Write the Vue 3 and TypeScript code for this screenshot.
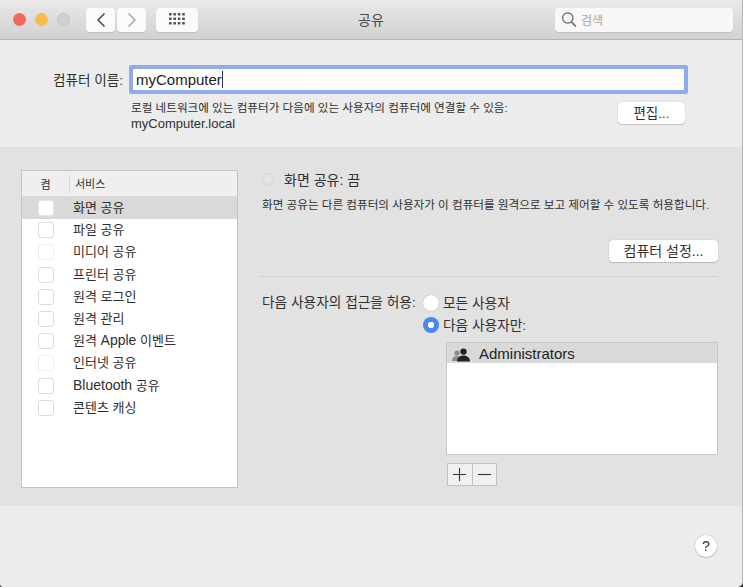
<script setup lang="ts">
import { ref } from 'vue'

interface Service {
  name: string
  latin?: string
  suffix?: string
  dim?: boolean
}

const services: Service[] = [
  { name: '화면 공유' },
  { name: '파일 공유' },
  { name: '미디어 공유', dim: true },
  { name: '프린터 공유' },
  { name: '원격 로그인' },
  { name: '원격 관리' },
  { name: '원격 ', latin: 'Apple', suffix: ' 이벤트' },
  { name: '인터넷 공유', dim: true },
  { name: '', latin: 'Bluetooth', suffix: ' 공유' },
  { name: '콘텐츠 캐싱' },
]

const selected = ref(0)
</script>

<template>
  <div class="window">
    <header class="titlebar">
      <div class="lights">
        <span class="light red"></span>
        <span class="light yellow"></span>
        <span class="light grey"></span>
      </div>
      <div class="nav">
        <button class="tool nav-btn">
          <svg width="10" height="16" viewBox="0 0 10 16"><path d="M8.5 1.500 2 8l6.500 6.500" fill="none" stroke="#4a4a4a" stroke-width="1.500" /></svg>
        </button>
        <button class="tool nav-btn">
          <svg width="10" height="16" viewBox="0 0 10 16"><path d="M1.500 1.500 8 8l-6.500 6.500" fill="none" stroke="#a9a9a9" stroke-width="1.500" /></svg>
        </button>
      </div>
      <button class="tool grid-btn">
        <svg width="17" height="13" viewBox="0 0 17 13" fill="#555">
          <template v-for="y in [0, 4.5, 9]" :key="y">
            <rect v-for="x in [0, 4.4, 8.8, 13.2]" :key="x" :x="x" :y="y" width="2.600" height="2.600" rx="0.500" />
          </template>
        </svg>
      </button>
      <div class="title">공유</div>
      <div class="search">
        <svg width="16" height="17" viewBox="0 0 16 17"><circle cx="6.800" cy="7" r="5.200" fill="none" stroke="#5f5f5f" stroke-width="1.200" /><path d="m10.600 11 4.200 4.600" stroke="#5f5f5f" stroke-width="1.500" /></svg>
        <span>검색</span>
      </div>
    </header>

    <section class="name-section">
      <div class="name-row">
        <label class="name-label">컴퓨터 이름:</label>
        <div class="name-input"><span class="latin-big">myComputer</span><i class="caret"></i></div>
      </div>
      <div class="local-row">
        <p class="local-text">로컬 네트워크에 있는 컴퓨터가 다음에 있는 사용자의 컴퓨터에 연결할 수 있음:<br /><span class="latin">myComputer.local</span></p>
        <button class="btn edit-btn">편집...</button>
      </div>
    </section>

    <section class="service-section">
      <div class="service-list">
        <div class="list-head">
          <span class="head-on">켬</span>
          <span class="head-name">서비스</span>
        </div>
        <div
          v-for="(s, i) in services"
          :key="i"
          class="service-row"
          :class="{ selected: selected === i }"
          @click="selected = i"
        >
          <span class="check" :class="{ dim: s.dim }"></span>
          <span class="service-name">{{ s.name }}<span v-if="s.latin" class="latin">{{ s.latin }}</span>{{ s.suffix }}</span>
        </div>
      </div>

      <div class="detail">
        <div class="status">
          <span class="status-dot"></span>
          <span class="status-text">화면 공유: 끔</span>
        </div>
        <p class="status-desc">화면 공유는 다른 컴퓨터의 사용자가 이 컴퓨터를 원격으로 보고 제어할 수 있도록 허용합니다.</p>
        <div class="settings-row">
          <button class="btn settings-btn">컴퓨터 설정...</button>
        </div>
        <div class="divider"></div>
        <div class="access">
          <span class="access-label">다음 사용자의 접근을 허용:</span>
          <div class="radios">
            <div class="radio-row"><span class="radio"></span><span class="radio-text">모든 사용자</span></div>
            <div class="radio-row"><span class="radio on"></span><span class="radio-text">다음 사용자만:</span></div>
          </div>
        </div>
        <div class="users">
          <div class="user-row">
            <svg width="19" height="14" viewBox="0 0 19 14">
              <circle cx="5" cy="5" r="2.600" fill="#8a8a8a" />
              <path d="M0 13c0-3 2-5 5-5s4 2 4 5z" fill="#8a8a8a" />
              <circle cx="11.500" cy="3.600" r="3.200" fill="#222" />
              <path d="M5 13.600c0-3.600 2.600-6 6.500-6s6.500 2.400 6.500 6z" fill="#222" />
            </svg>
            <span class="latin-big">Administrators</span>
          </div>
        </div>
        <div class="plus-minus">
          <button class="pm">
            <svg width="15" height="15" viewBox="0 0 15 15"><path d="M7.500 1v13M1 7.500h13" stroke="#333" stroke-width="1.100" /></svg>
          </button>
          <button class="pm">
            <svg width="15" height="15" viewBox="0 0 15 15"><path d="M1 7.500h13" stroke="#333" stroke-width="1.100" /></svg>
          </button>
        </div>
      </div>
    </section>

    <footer class="bottom">
      <button class="help">?</button>
    </footer>
  </div>
</template>

<style>
html,
body {
  margin: 0;
  background: #1e1e1e;
}
</style>

<style scoped>
.window {
  width: 743px;
  height: 587px;
  box-sizing: border-box;
  display: flex;
  flex-direction: column;
  overflow: hidden;
  background: #ececec;
  border-right: 1px solid #b8b8b8;
  border-bottom-right-radius: 5px;
  border-bottom-left-radius: 3px;
  color: #303030;
  font-family: "Liberation Sans", "Noto Sans CJK KR", sans-serif;
  font-size: 13px;
}

button {
  font-family: inherit;
  color: inherit;
  padding: 0;
  border: none;
}

p {
  margin: 0;
}

.latin {
  font-size: 14px;
}

.latin-big {
  font-size: 15px;
}

.titlebar {
  height: 39px;
  flex: none;
  display: flex;
  align-items: center;
  position: relative;
  background: linear-gradient(#e9e9e9, #d1d1d1);
  border-bottom: 1px solid #b4b4b4;
}

.lights {
  display: flex;
  gap: 9px;
  margin-left: 13px;
}

.light {
  width: 13px;
  height: 13px;
  border-radius: 50%;
}

.red {
  background: #ee6a5f;
}

.yellow {
  background: #f5bd4f;
}

.grey {
  background: #d0d0d0;
  border: 1px solid #c2c2c2;
  box-sizing: border-box;
}

.tool {
  height: 24px;
  background: #fbfbfb;
  border-radius: 4px;
  box-shadow: 0 1px 1px rgba(0, 0, 0, 0.12);
  display: flex;
  align-items: center;
  justify-content: center;
}

.nav {
  display: flex;
  gap: 2px;
  margin-left: 16px;
}

.nav-btn {
  width: 29px;
}

.grid-btn {
  width: 42px;
  margin-left: 10px;
}

.title {
  position: absolute;
  left: 0;
  right: 0;
  padding-bottom: 2px;
  text-align: center;
  font-size: 14px;
  color: #4a4a4a;
}

.search {
  margin-left: auto;
  margin-right: 9px;
  width: 178px;
  height: 24px;
  box-sizing: border-box;
  padding-left: 6px;
  display: flex;
  align-items: center;
  gap: 4px;
  background: #f8f8f8;
  border-radius: 4px;
  box-shadow: 0 1px 1px rgba(0, 0, 0, 0.12);
  color: #a6a6a6;
  font-size: 12px;
  position: relative;
}

.name-section {
  height: 108px;
  flex: none;
  box-sizing: border-box;
  padding-top: 25px;
  border-bottom: 1px solid #e0e0e0;
}

.name-row {
  display: flex;
  align-items: center;
  height: 29px;
}

.name-label {
  width: 123px;
  text-align: right;
  font-size: 13.6px;
  padding-bottom: 2px;
}

.name-input {
  margin-left: 6px;
  width: 548px;
  height: 21px;
  background: #fff;
  border: 4px solid #8fabe9;
  border-radius: 2px;
  display: flex;
  align-items: center;
  padding-left: 3px;
  color: #222;
}

.caret {
  width: 1px;
  height: 17px;
  background: #23364f;
}

.local-row {
  display: flex;
  margin: 6px 0 0 131px;
  width: 554px;
  justify-content: space-between;
}

.local-text {
  font-size: 11.6px;
  line-height: 16px;
}

.local-text .latin {
  font-size: 13px;
  line-height: 1;
}

.btn {
  height: 22px;
  background: #fff;
  border-radius: 4px;
  box-shadow: 0 0 1px rgba(0, 0, 0, 0.35), 0 1px 1px rgba(0, 0, 0, 0.15);
  font-size: 14px;
  padding-bottom: 2px;
}

.edit-btn {
  width: 67px;
  margin-top: 2px;
  font-size: 13.5px;
}

.service-section {
  height: 358px;
  flex: none;
  box-sizing: border-box;
  background: #e2e2e2;
  padding: 22px 24px 0 21px;
  display: flex;
}

.service-list {
  width: 217px;
  height: 318px;
  box-sizing: border-box;
  background: #fff;
  border: 1px solid #c4c4c4;
}

.list-head {
  height: 26px;
  display: flex;
  align-items: center;
  background: #efefef;
  border-bottom: 1px solid #dcdcdc;
  box-sizing: border-box;
  font-size: 11px;
}

.head-on {
  width: 47px;
  text-align: center;
}

.head-name {
  padding-left: 5px;
  border-left: 1px solid #d9d9d9;
  line-height: 20px;
}

.service-row {
  height: 22.2px;
  display: flex;
  align-items: center;
}

.service-row.selected {
  background: #d9d9d9;
}

.check {
  width: 16px;
  height: 16px;
  margin-left: 16px;
  box-sizing: border-box;
  background: #fff;
  border: 1px solid #dcdcdc;
  border-radius: 3px;
}

.check.dim {
  border-color: #eeeeee;
}

.selected .check {
  border-color: #e6e6e6;
}

.service-name {
  margin-left: 19px;
  padding-bottom: 3px;
}

.detail {
  margin-left: 21px;
  width: 459px;
}

.status {
  display: flex;
  align-items: center;
  height: 17px;
  padding-left: 3px;
}

.status-dot {
  width: 12px;
  height: 12px;
  margin-top: 1px;
  box-sizing: border-box;
  border-radius: 50%;
  border: 1px solid #d6d6d6;
  background: #e4e4e4;
}

.status-text {
  margin-left: 10px;
  font-size: 14px;
}

.status-desc {
  margin: 10px 0 0 3px;
  font-size: 11.6px;
  line-height: 16px;
  white-space: nowrap;
}

.settings-row {
  display: flex;
  justify-content: flex-end;
  margin-top: 27px;
}

.settings-btn {
  width: 109px;
}

.divider {
  height: 1px;
  background: #d0d0d0;
  margin-top: 14px;
}

.access {
  display: flex;
  margin: 18px 0 0 3px;
  font-size: 13.7px;
}

.access-label {
  width: 161px;
  line-height: 16px;
}

.radios {
  display: flex;
  flex-direction: column;
  gap: 6px;
}

.radio-row {
  display: flex;
  align-items: center;
  gap: 4px;
  height: 16px;
  white-space: nowrap;
}

.radio-text {
  padding-bottom: 2px;
}

.radio {
  width: 16px;
  height: 16px;
  flex: none;
  box-sizing: border-box;
  background: #fff;
  border-radius: 50%;
  box-shadow: 0 0 1px rgba(0, 0, 0, 0.4);
}

.radio.on {
  background: radial-gradient(circle, #fff 0 3px, #4b86f2 3.5px);
  box-shadow: none;
}

.users {
  margin: 9px 0 0 187px;
  height: 113px;
  box-sizing: border-box;
  background: #fff;
  border: 1px solid #c8c8c8;
}

.user-row {
  height: 20px;
  display: flex;
  align-items: center;
  gap: 8px;
  padding-left: 5px;
  box-sizing: border-box;
  background: #d9d9d9;
  color: #222;
}

.user-row svg {
  margin-top: 3px;
}

.plus-minus {
  display: flex;
  width: 50px;
  margin: 8px 0 0 188px;
  box-sizing: border-box;
  border: 1px solid #c2c2c2;
  height: 23px;
}

.pm {
  flex: 1;
  background: #f0f0f0;
  display: flex;
  align-items: center;
  justify-content: center;
}

.pm + .pm {
  border-left: 1px solid #c2c2c2;
}

.bottom {
  flex: 1;
  display: flex;
  justify-content: flex-end;
  padding: 29px 25px 0 0;
}

.help {
  width: 22px;
  height: 22px;
  border-radius: 50%;
  background: #fff;
  box-shadow: 0 0 1px rgba(0, 0, 0, 0.4), 0 1px 1px rgba(0, 0, 0, 0.15);
  font-size: 14px;
}
</style>
